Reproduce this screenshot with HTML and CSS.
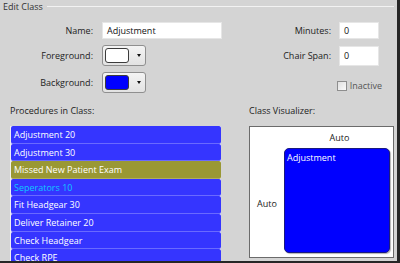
FILE: index.html
```html
<!DOCTYPE html>
<html lang="en">
<head>
  <meta charset="UTF-8" />
  <title>Edit Class</title>
  <link rel="stylesheet" href="styles.css">
</head>
<body>

<div class="window">
  <div class="group-title">
    <span>Edit Class</span>
    <div class="group-line"></div>
  </div>

  <div class="fields">
    <label class="lbl">Name:</label>
    <div class="text-input wide">Adjustment</div>
    <div></div>
    <label class="lbl">Minutes:</label>
    <div class="text-input">0</div>

    <label class="lbl">Foreground:</label>
    <div class="color-btn"><span class="swatch fg"></span><span class="arrow"></span></div>
    <div></div>
    <label class="lbl">Chair Span:</label>
    <div class="text-input tall">0</div>

    <label class="lbl">Background:</label>
    <div class="color-btn"><span class="swatch bg"></span><span class="arrow"></span></div>
    <div></div>
    <div class="check-row"><span class="checkbox"></span>Inactive</div>
  </div>

  <div class="bottom">
    <div class="procedures">
      <div class="section-title">Procedures in Class:</div>
      <ul class="proc-list">
        <li>Adjustment 20</li>
        <li>Adjustment 30</li>
        <li class="olive">Missed New Patient Exam</li>
        <li class="cyan">Seperators 10</li>
        <li>Fit Headgear 30</li>
        <li>Deliver Retainer 20</li>
        <li>Check Headgear</li>
        <li>Check RPE</li>
      </ul>
    </div>
    <div class="visualizer">
      <div class="section-title">Class Visualizer:</div>
      <div class="vis-box">
        <div></div>
        <div class="auto-top">Auto</div>
        <div class="auto-side">Auto</div>
        <div class="class-block">Adjustment</div>
      </div>
    </div>
  </div>
</div>

</body>
</html>
```

FILE: styles.css
```css
body {
  margin: 0;
  width: 400px;
  height: 263px;
  overflow: hidden;
  background: #d4d4d4;
  font-family: 'Open Sans', 'Noto Sans', sans-serif;
  font-size: 9px;
  color: #222;
}

.window {
  width: 397px;
  height: 261px;
  border-right: 3px solid #262626;
  border-bottom: 2px solid #262626;
  overflow: hidden;
}

.group-title {
  display: flex;
  align-items: center;
  height: 13px;
  padding-left: 3px;
  color: #333;
}
.group-title span {
  padding-right: 4px;
}
.group-line {
  flex: 1;
  height: 0;
  border-top: 1px solid #f2f2f2;
  margin-right: 3px;
}

.fields {
  display: grid;
  grid-template-columns: 93px 120px 1fr auto 40px;
  grid-template-rows: 17px 21px 21px;
  column-gap: 9px;
  row-gap: 6px;
  margin-top: 9px;
  padding-right: 18px;
  align-items: center;
}
.lbl {
  text-align: right;
}
.fields .lbl:nth-child(4),
.fields .lbl:nth-child(9) {
  margin-right: -1px;
}
.text-input {
  height: 17px;
  line-height: 16px;
  background: #fff;
  border: 1px solid #e6e6e6;
  box-sizing: border-box;
  padding-left: 4px;
  color: #111;
}
.text-input.tall {
  height: 20px;
  line-height: 17px;
}

.color-btn {
  width: 44px;
  height: 21px;
  box-sizing: border-box;
  border: 1px solid #8f8f8f;
  border-radius: 3px;
  background: linear-gradient(#f4f4f4, #e2e2e2);
  display: flex;
  align-items: center;
  padding-left: 2px;
}
.swatch {
  width: 24px;
  height: 15px;
  box-sizing: border-box;
  border: 1px solid #3c3c3c;
  border-radius: 3px;
}
.swatch.fg { background: #fff; }
.swatch.bg { background: #0000ff; }
.arrow {
  margin-left: 8px;
  width: 0;
  height: 0;
  border-left: 2px solid transparent;
  border-right: 2px solid transparent;
  border-top: 3px solid #111;
}

.check-row {
  grid-column: 4 / 6;
  display: flex;
  align-items: center;
  gap: 3px;
  margin-left: auto;
  margin-right: -3px;
  margin-top: 6px;
  color: #555;
}
.checkbox {
  width: 10px;
  height: 10px;
  box-sizing: border-box;
  border: 1px solid #8e8e8e;
  background: linear-gradient(135deg, #e0e0e0, #fafafa);
}

.bottom {
  display: flex;
  gap: 28px;
  margin-top: 11px;
  padding-left: 10px;
}
.section-title {
  height: 13px;
  line-height: 13px;
  margin-bottom: 9px;
}

.procedures {
  width: 211px;
}
.proc-list {
  list-style: none;
  margin: 0;
  padding: 0;
  background: #fff;
  border-left: 1px solid #f0f0f0;
}
.proc-list li {
  height: 17.6px;
  line-height: 17px;
  box-sizing: border-box;
  padding-left: 3px;
  background: #3535ff;
  color: #fff;
  border-bottom: 1px solid #6a6aff;
  border-radius: 2px;
}
.proc-list li.olive {
  background: #9a9834;
  border-bottom-color: #b0ae60;
}
.proc-list li.cyan {
  color: #10c8ff;
}

.visualizer {
  width: 145px;
}
.vis-box {
  height: 132px;
  box-sizing: border-box;
  background: #fff;
  border: 1px solid #6b6b6b;
  display: grid;
  grid-template-columns: 34px 1fr;
  grid-template-rows: 21px 1fr;
}
.auto-top {
  text-align: center;
  line-height: 21px;
  padding-left: 2px;
}
.auto-side {
  align-self: center;
  text-align: center;
  padding-top: 2px;
}
.class-block {
  background: #0000ff;
  border: 1px solid #1a1a80;
  border-radius: 5px;
  margin: 0 3px 4px 0;
  color: #fff;
  padding: 2px 2px;
  box-shadow: 1px 1px 1px rgba(0,0,0,0.3);
}
```
